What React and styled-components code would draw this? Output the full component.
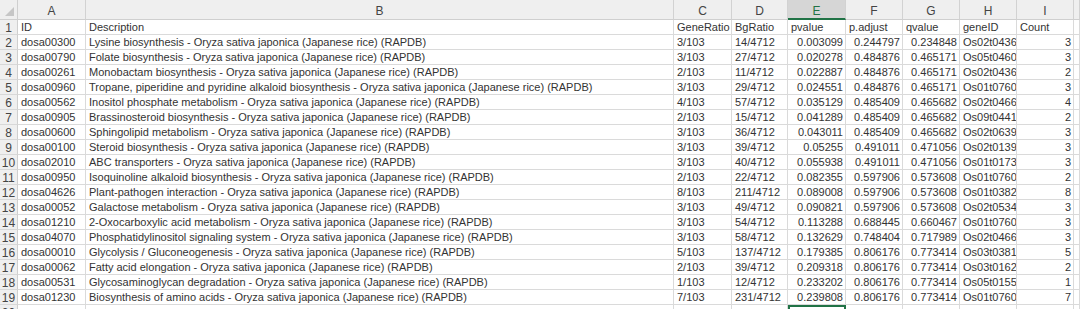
import React from "react";
import styled, { createGlobalStyle, css } from "styled-components";

const Global = createGlobalStyle`
  html, body { margin: 0; padding: 0; background: #fff; overflow: hidden; }
  body { font-family: "Liberation Sans", Arial, sans-serif; }
`;

const COLS = [18, 68, 588, 58, 56, 58, 57, 57, 57, 57];
const LETTERS = ["A", "B", "C", "D", "E", "F", "G", "H", "I", ""];
const SELECTED_COL = 4;

const Sheet = styled.div`
  display: grid;
  grid-template-columns: ${COLS.map((c) => c + "px").join(" ")} 1fr;
  grid-template-rows: 20px repeat(20, 15px);
  width: 1080px;
  height: 309px;
  overflow: hidden;
  font-size: 11px;
  color: #333;
`;

const Corner = styled.div`
  position: relative;
  box-sizing: border-box;
  background: #efefef;
  border-right: 1px solid #cfcfcf;
  border-bottom: 1px solid #cfcfcf;
  &::after {
    content: "";
    position: absolute;
    right: 3px;
    bottom: 3px;
    width: 0;
    height: 0;
    border-left: 9px solid transparent;
    border-bottom: 9px solid #c6c6c6;
  }
`;

const ColHead = styled.div`
  box-sizing: border-box;
  background: ${(p) => (p.$sel ? "#d6d6d6" : "#efefef")};
  border-right: 1px solid #d2d2d2;
  border-bottom: ${(p) => (p.$sel ? "2px solid #217346" : "1px solid #cfcfcf")};
  color: ${(p) => (p.$sel ? "#217346" : "#444")};
  font-size: 12px;
  display: flex;
  align-items: center;
  justify-content: center;
  padding-top: 3px;
`;

const RowHead = styled.div`
  box-sizing: border-box;
  background: #efefef;
  border-right: 1px solid #cfcfcf;
  border-bottom: 1px solid #d8d8d8;
  color: #444;
  font-size: 12px;
  display: flex;
  align-items: center;
  justify-content: center;
  line-height: 1;
  padding-top: 1px;
`;

const Cell = styled.div`
  box-sizing: border-box;
  border-right: 1px solid #dadada;
  border-bottom: 1px solid #dadada;
  display: flex;
  align-items: center;
  padding: 1px 2px 0 3px;
  white-space: nowrap;
  overflow: hidden;
  line-height: 1;
  justify-content: ${(p) => (p.$right ? "flex-end" : "flex-start")};
  ${(p) =>
    p.$active &&
    css`
      border: 2px solid #217346;
      border-bottom: none;
    `}
`;

const rows = [
  ["dosa00300", "Lysine biosynthesis", "3/103", "14/4712", "0.003099", "0.244797", "0.234848", "Os02t0436", "3"],
  ["dosa00790", "Folate biosynthesis", "3/103", "27/4712", "0.020278", "0.484876", "0.465171", "Os05t0460", "3"],
  ["dosa00261", "Monobactam biosynthesis", "2/103", "11/4712", "0.022887", "0.484876", "0.465171", "Os02t0436", "2"],
  ["dosa00960", "Tropane, piperidine and pyridine alkaloid biosynthesis", "3/103", "29/4712", "0.024551", "0.484876", "0.465171", "Os01t0760", "3"],
  ["dosa00562", "Inositol phosphate metabolism", "4/103", "57/4712", "0.035129", "0.485409", "0.465682", "Os02t0466", "4"],
  ["dosa00905", "Brassinosteroid biosynthesis", "2/103", "15/4712", "0.041289", "0.485409", "0.465682", "Os09t0441", "2"],
  ["dosa00600", "Sphingolipid metabolism", "3/103", "36/4712", "0.043011", "0.485409", "0.465682", "Os02t0639", "3"],
  ["dosa00100", "Steroid biosynthesis", "3/103", "39/4712", "0.05255", "0.491011", "0.471056", "Os02t0139", "3"],
  ["dosa02010", "ABC transporters", "3/103", "40/4712", "0.055938", "0.491011", "0.471056", "Os01t0173", "3"],
  ["dosa00950", "Isoquinoline alkaloid biosynthesis", "2/103", "22/4712", "0.082355", "0.597906", "0.573608", "Os01t0760", "2"],
  ["dosa04626", "Plant-pathogen interaction", "8/103", "211/4712", "0.089008", "0.597906", "0.573608", "Os01t0382", "8"],
  ["dosa00052", "Galactose metabolism", "3/103", "49/4712", "0.090821", "0.597906", "0.573608", "Os02t0534", "3"],
  ["dosa01210", "2-Oxocarboxylic acid metabolism", "3/103", "54/4712", "0.113288", "0.688445", "0.660467", "Os01t0760", "3"],
  ["dosa04070", "Phosphatidylinositol signaling system", "3/103", "58/4712", "0.132629", "0.748404", "0.717989", "Os02t0466", "3"],
  ["dosa00010", "Glycolysis / Gluconeogenesis", "5/103", "137/4712", "0.179385", "0.806176", "0.773414", "Os03t0381", "5"],
  ["dosa00062", "Fatty acid elongation", "2/103", "39/4712", "0.209318", "0.806176", "0.773414", "Os03t0162", "2"],
  ["dosa00531", "Glycosaminoglycan degradation", "1/103", "12/4712", "0.233202", "0.806176", "0.773414", "Os05t0155", "1"],
  ["dosa01230", "Biosynthesis of amino acids", "7/103", "231/4712", "0.239808", "0.806176", "0.773414", "Os01t0760", "7"],
];

const SUFFIX = " - Oryza sativa japonica (Japanese rice) (RAPDB)";
const header = ["ID", "Description", "GeneRatio", "BgRatio", "pvalue", "p.adjust", "qvalue", "geneID", "Count"];
const RIGHT = new Set([4, 5, 6, 8]);

export default function App() {
  const body = [header, ...rows.map((r) => [r[0], r[1] + SUFFIX, ...r.slice(2)]), Array(9).fill("")];
  return (
    <>
      <Global />
      <Sheet>
        <Corner />
        {LETTERS.map((l, i) => (
          <ColHead key={"h" + i} $sel={i === SELECTED_COL}>
            {l}
          </ColHead>
        ))}
        {body.map((r, ri) => (
          <React.Fragment key={ri}>
            <RowHead>{ri + 1}</RowHead>
            {r.map((v, ci) => (
              <Cell
                key={ci}
                $right={ri > 0 && RIGHT.has(ci)}
                $active={ri === 19 && ci === SELECTED_COL}
              >
                {v}
              </Cell>
            ))}
            <Cell />
          </React.Fragment>
        ))}
      </Sheet>
    </>
  );
}
